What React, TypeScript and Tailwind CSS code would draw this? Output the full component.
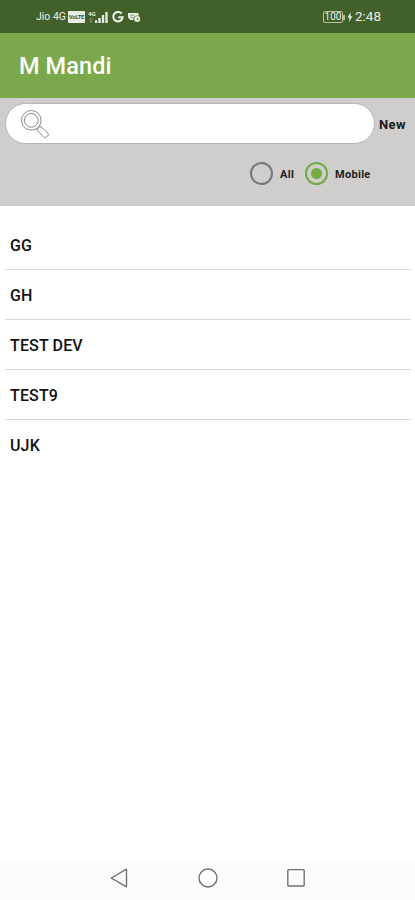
import { useState } from 'react';

const parties = ['GG', 'GH', 'TEST DEV', 'TEST9', 'UJK'];

function StatusBar() {
    return (
        <div className="h-[33px] bg-[#42602a] pl-9 pr-[34px] flex items-center justify-between text-[#e8eee3]">
            <div className="flex items-center pt-px">
                <span className="w-[30px] text-[10.5px] leading-none whitespace-nowrap">Jio 4G</span>
                <span className="ml-[2px] w-[17px] h-[12px] rounded-[1px] bg-[#e8eee3] text-[#42602a] text-[6px] font-bold leading-[12px] text-center tracking-tighter">VoLTE</span>
                <svg className="ml-[3px]" width="21" height="14" viewBox="0 0 21 14" fill="currentColor">
                    <text x="0" y="5.5" fontSize="6" fontWeight="700">4G</text>
                    <path d="M3 8l2 2H1zM3 13l-2-2h4z" opacity=".4" />
                    <path d="M7 10.3h2.2V13H7zM10.3 8h2.4v5h-2.4zM13.8 5h2.4v8h-2.4zM17.3 2h2.4v11h-2.4z" />
                </svg>
                <svg className="ml-[3px]" width="12" height="12" viewBox="0 0 12 12" fill="none" stroke="currentColor" strokeWidth="2.1">
                    <path d="M9.7 2.7A4.7 4.7 0 1 0 10.7 6.3H6.2" />
                </svg>
                <svg className="ml-[4px]" width="13" height="11" viewBox="0 0 13 11" fill="currentColor">
                    <path d="M0 1h10.5v3.2A3.2 3.2 0 0 0 5.6 8H2.2L0 5.5z" />
                    <path d="M2 3.2h4M2.5 5.4h2.5" fill="none" stroke="#42602a" strokeWidth=".6" />
                    <circle cx="9.2" cy="7.1" r="3" />
                    <path d="M9.2 5.6v1.7h1.4" fill="none" stroke="#42602a" strokeWidth=".8" />
                </svg>
            </div>
            <div className="flex items-center pt-px">
                <div className="w-[20px] h-[12px] rounded-[2px] border border-[#b3c0a8] text-[10px] leading-[10px] flex justify-center">100</div>
                <div className="w-[2px] h-[5px] bg-[#b3c0a8]" />
                <svg className="ml-[2px]" width="6" height="10" viewBox="0 0 6 10" fill="currentColor">
                    <path d="M3.6 0L.6 5.5h1.8L2 10l3.4-5.8H3.4z" />
                </svg>
                <span className="ml-[2px] text-[13.5px] leading-none">2:48</span>
            </div>
        </div>
    );
}

function SearchIcon() {
    return (
        <svg width="28" height="28" viewBox="0 0 28 28" fill="none" stroke="#8a8a8a" strokeWidth="1">
            <circle cx="10.3" cy="10.3" r="9.8" />
            <circle cx="10.3" cy="10.3" r="6.9" />
            <path d="M15.3 18.6l1.2 1.6M18.4 15.8l1.6 1.1" />
            <path d="M16.3 20.4q-.2-1.3 1.2-2.6 1.3-1.2 2.6-1l7 6.5q1 1.6-.9 3.3-1.8 1.5-3.3.7z" />
        </svg>
    );
}

function Radio({ label, checked, onSelect }: { label: string; checked: boolean; onSelect: () => void }) {
    return (
        <button type="button" role="radio" aria-checked={checked} onClick={onSelect} className="flex items-center">
            <span
                className={`size-[23px] rounded-full border-2 flex items-center justify-center ${checked ? 'border-[#72ab42]' : 'border-[#777]'}`}
            >
                {checked && <span className="size-[11px] rounded-full bg-[#72ab42]" />}
            </span>
            <span className="ml-[7px] pt-px text-[11px] font-bold leading-none tracking-[0.3px] text-[#222]">{label}</span>
        </button>
    );
}

export default function App() {
    const [filter, setFilter] = useState('Mobile');
    const [query, setQuery] = useState('');

    return (
        <div className="w-full h-[900px] bg-white flex flex-col overflow-hidden font-['Roboto',sans-serif]">
            <StatusBar />

            <header className="h-[65px] bg-[#7ba84b] px-[19px] flex items-center">
                <h1 className="text-[23.5px] font-medium text-white leading-none tracking-[0.1px] pt-[3px]">M Mandi</h1>
            </header>

            <section className="h-[108px] bg-[#d0cecd] pt-[5px]">
                <div className="flex items-center pl-[5px]">
                    <div className="w-[370px] h-[41px] rounded-full border border-[#b5b4b3] bg-white flex items-center pl-[15px]">
                        <SearchIcon />
                        <input
                            value={query}
                            onChange={(e) => setQuery(e.target.value)}
                            className="flex-1 h-full pl-2 pr-5 outline-none bg-transparent"
                        />
                    </div>
                    <button type="button" className="ml-[4px] pt-px text-[13px] font-bold leading-none tracking-[0.4px] text-[#1a1a1a]">New</button>
                </div>
                <div role="radiogroup" className="mt-[18px] pl-[250px] flex">
                    <div className="w-[55px] shrink-0">
                        <Radio label="All" checked={filter === 'All'} onSelect={() => setFilter('All')} />
                    </div>
                    <Radio label="Mobile" checked={filter === 'Mobile'} onSelect={() => setFilter('Mobile')} />
                </div>
            </section>

            <ul className="flex-1 pt-[14px] pl-[5px] pr-[4px] divide-y divide-[#d9d9d9]">
                {parties.map((name) => (
                    <li key={name} className="h-[50px] pl-[5px] pt-[2px] flex items-center text-[16px] font-medium tracking-[0.15px] text-[#111]">
                        {name}
                    </li>
                ))}
            </ul>

            <nav className="h-[40px] bg-[#fcfcfc] pl-[110px] flex items-start pt-[8px] text-[#707070]">
                <svg width="18" height="20" viewBox="0 0 18 20" fill="none" stroke="currentColor" strokeWidth="1.4" strokeLinejoin="round">
                    <path d="M16.5 1.2v17.6L1.2 10z" />
                </svg>
                <svg className="ml-[70px]" width="20" height="20" viewBox="0 0 20 20" fill="none" stroke="currentColor" strokeWidth="1.4">
                    <circle cx="10" cy="10" r="9" />
                </svg>
                <svg className="ml-[69px]" width="18" height="20" viewBox="0 0 18 20" fill="none" stroke="currentColor" strokeWidth="1.4">
                    <rect x=".8" y="1.6" width="16.4" height="16.4" rx="1" />
                </svg>
            </nav>
        </div>
    );
}
